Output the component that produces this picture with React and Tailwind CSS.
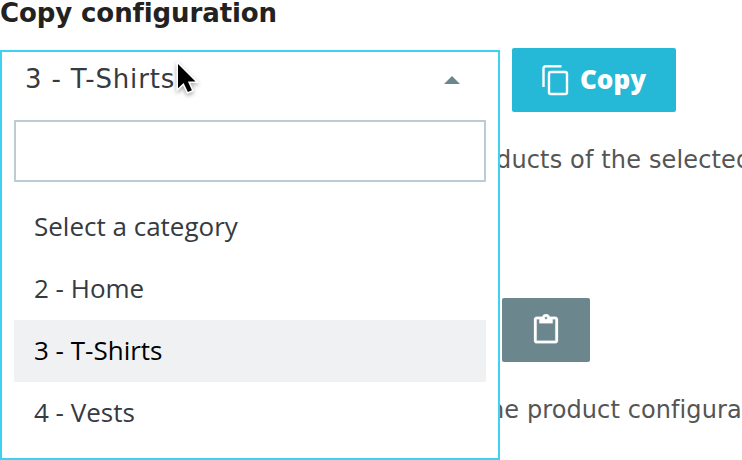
const options = ['Select a category', '2 - Home', '3 - T-Shirts', '4 - Vests'];

function CopyIcon() {
  return (
    <svg viewBox="0 0 32 32" className="size-8" fill="none" stroke="currentColor" strokeWidth="2.4">
      <path d="M21.500 2.200H5.500a2 2 0 0 0-2 2V23" />
      <rect x="9" y="8" width="18" height="22" rx="1.800" />
    </svg>
  );
}

function PasteIcon() {
  return (
    <svg viewBox="0 0 24 24" className="size-8" fill="currentColor" stroke="currentColor" strokeWidth="0.2">
      <path d="M19 2h-4.18C14.4.84 13.3 0 12 0c-1.3 0-2.4.84-2.82 2H5c-1.1 0-2 .9-2 2v16c0 1.1.9 2 2 2h14c1.1 0 2-.9 2-2V4c0-1.1-.9-2-2-2zm-7 0c.55 0 1 .45 1 1s-.45 1-1 1-1-.45-1-1 .45-1 1-1zm7 18H5V4h2v3h10V4h2v16z" />
    </svg>
  );
}

function Cursor() {
  return (
    <svg
      viewBox="0 0 26 38"
      className="absolute left-[171px] top-[7px] h-[38px] w-[26px] drop-shadow-[0_2px_2px_rgba(0,0,0,0.35)]"
    >
      <path
        d="M5 5v24.300l5.600-5.200 4.300 8.900 4-1.700-4-8.900h7.600z"
        fill="#000"
        stroke="#fff"
        strokeWidth="3"
        paintOrder="stroke"
      />
    </svg>
  );
}

function CategorySelect() {
  return (
    <div className="relative h-16 w-[500px]">
      <div className="absolute left-0 top-0 z-10 h-[410px] w-[500px] border-2 border-[#3ed2f0] bg-white px-3">
        <div className="flex h-[54px] items-center justify-between pl-[11px] pr-[26px] text-[26px] text-[#363a41]">
          <span className="whitespace-nowrap tracking-[0.85px]">3 - T-Shirts</span>
          <svg viewBox="0 0 16 8" className="mt-0.5 h-2 w-4" fill="#6c868e">
            <path d="M8 0l8 8H0z" />
          </svg>
        </div>
        <div className="mt-[14px] h-[62px] border-2 border-[#bbcdd2]" />
        <ul className="mt-[14px] font-['Open_Sans',sans-serif] text-[26px] text-[#363a41]">
          {options.map((option) => (
            <li
              key={option}
              className={
                option === '3 - T-Shirts'
                  ? 'flex h-[62px] items-center bg-[#eff1f2] pb-0.5 pl-5 text-black'
                  : 'flex h-[62px] items-center pb-0.5 pl-5'
              }
            >
              <span className="whitespace-nowrap">{option}</span>
            </li>
          ))}
        </ul>
        <Cursor />
      </div>
    </div>
  );
}

export default function App() {
  return (
    <main className="h-[460px] w-[742px] overflow-hidden bg-white font-['DejaVu_Sans',sans-serif]">
      <h2 className="h-12 whitespace-nowrap text-[26px] font-bold leading-[26px] tracking-[-0.1px] text-[#222]">
        Copy configuration
      </h2>
      <div className="flex gap-3">
        <div className="pt-0.5">
          <CategorySelect />
        </div>
        <button className="flex h-16 w-[164px] items-center gap-2 rounded-[2px] bg-[#25b9d7] pl-7 font-['Open_Sans',sans-serif] text-[26px] font-extrabold text-white">
          <CopyIcon />
          <span className="pb-0.5">Copy</span>
        </button>
      </div>
      <p className="mt-[30px] h-8 whitespace-nowrap pl-[496px] text-[24px] leading-8 tracking-[0.15px] text-[#555]">
        ducts of the selected
      </p>
      <button className="ml-[502px] mt-[122px] flex h-16 w-[88px] items-center justify-center rounded-[2px] bg-[#6c868e] text-white">
        <PasteIcon />
      </button>
      <p className="mt-8 h-8 whitespace-nowrap pl-[489px] text-[24px] leading-8 tracking-[0.1px] text-[#555]">
        he product configuration
      </p>
    </main>
  );
}
